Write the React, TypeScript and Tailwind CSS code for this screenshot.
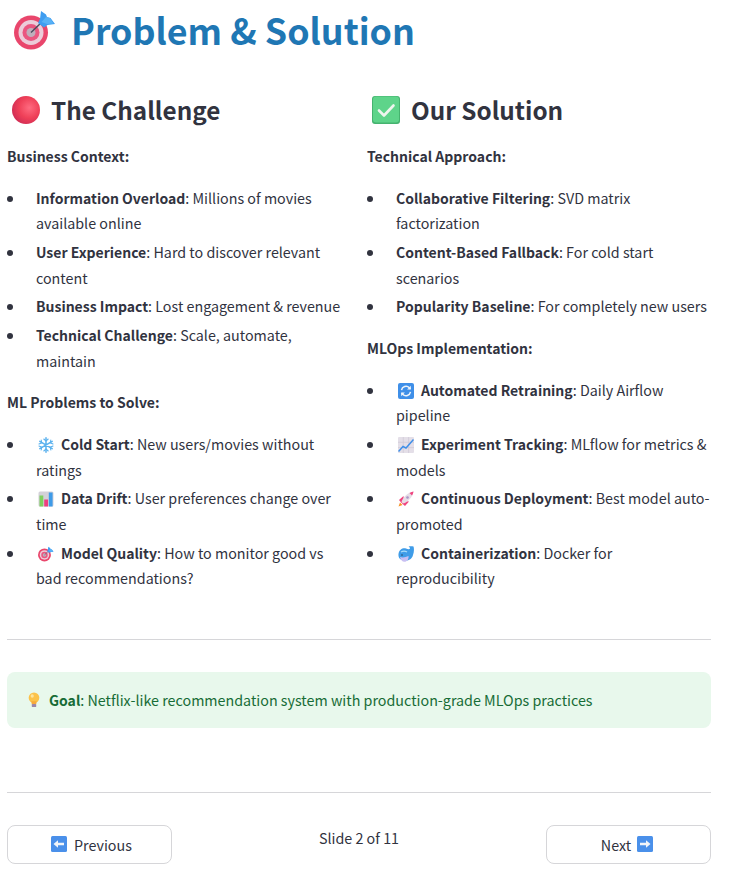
import { FC, ReactNode } from 'react';

type IconProps = { className: string };

const Dart: FC<IconProps> = ({ className }) => (
	<svg viewBox="0 0 42 40" className={className}>
		<circle cx="17" cy="22.500" r="17" fill="#e9466c" />
		<circle cx="17" cy="22.500" r="12.500" fill="#ecccd9" />
		<circle cx="17" cy="22.500" r="8.500" fill="#ea5680" />
		<circle cx="17" cy="22.500" r="4.500" fill="#bfaebb" />
		<path d="M17 22.500 29 11" stroke="#4a4a5c" strokeWidth="1.400" />
		<path d="M24 13 26 9 27 1 32 4.500 33 7 36.500 8 41 14 33.500 15 30 17.500Z" fill="#3f9df0" />
		<path d="M27.500 12 32 7 36 8 39.500 13.500 33 14 Z" fill="#58b2f6" />
	</svg>
);

const RedCircle: FC<IconProps> = ({ className }) => (
	<svg viewBox="0 0 28 28" className={className}>
		<defs>
			<radialGradient id="redBall" cx="62%" cy="42%" r="62%">
				<stop offset="0%" stopColor="#ff6b80" />
				<stop offset="60%" stopColor="#ef4058" />
				<stop offset="100%" stopColor="#d42f55" />
			</radialGradient>
		</defs>
		<circle cx="14" cy="14" r="14" fill="url(#redBall)" />
	</svg>
);

const CheckBox: FC<IconProps> = ({ className }) => (
	<svg viewBox="0 0 28 28" className={className}>
		<rect width="28" height="28" rx="3" fill="#45b36f" />
		<rect x="1" y="0.5" width="26" height="26" rx="3" fill="#5ed48a" />
		<path d="M7 14.5 L12 19.5 L21.5 9.5" fill="none" stroke="#eef5ee" strokeWidth="2.6" strokeLinecap="round" strokeLinejoin="round" />
	</svg>
);

const Snowflake: FC<IconProps> = ({ className }) => (
	<svg viewBox="0 0 16 16" className={className} fill="none" stroke="#5cb2ee" strokeWidth="1.5" strokeLinecap="round">
		<path d="M8 .8V15.200M1.800 4.400 14.200 11.600M1.800 11.600 14.200 4.400" />
		<path d="M5.800 2 8 4 10.200 2M5.800 14 8 12 10.200 14M1 7 3.700 5.800 3.200 3M15 9 12.300 10.200 12.800 13M1 9 3.700 10.200 3.200 13M15 7 12.300 5.800 12.800 3" strokeWidth="1.100" />
	</svg>
);

const BarChart: FC<IconProps> = ({ className }) => (
	<svg viewBox="0 0 16 16" className={className}>
		<rect x="0.500" y="0.500" width="15" height="15" rx="1.500" fill="#d3d1d8" />
		<rect x="1.500" y="4.500" width="3.800" height="11" fill="#7fd05e" />
		<rect x="6.200" y="8.500" width="3.800" height="7" fill="#ee3f80" />
		<rect x="10.800" y="1.500" width="3.800" height="14" fill="#3f9be8" />
	</svg>
);

const Refresh: FC<IconProps> = ({ className }) => (
	<svg viewBox="0 0 16 16" className={className}>
		<rect width="16" height="16" rx="2" fill="#3f8fe8" />
		<path d="M3.500 7.200A4.600 4.600 0 0 1 11.300 4.700L12.500 6" fill="none" stroke="#eef4fb" strokeWidth="1.500" />
		<path d="M12.800 2.800V6.500H9.100Z" fill="#eef4fb" />
		<path d="M12.500 8.800A4.600 4.600 0 0 1 4.700 11.300L3.500 10" fill="none" stroke="#eef4fb" strokeWidth="1.500" />
		<path d="M3.200 13.200V9.500H6.900Z" fill="#eef4fb" />
	</svg>
);

const LineChart: FC<IconProps> = ({ className }) => (
	<svg viewBox="0 0 16 16" className={className}>
		<rect width="16" height="16" rx="1" fill="#e4dfe8" />
		<path d="M0 5.300H16M0 10.600H16M5.300 0V16M10.600 0V16" stroke="#cfc8d6" strokeWidth="0.700" />
		<path d="M.5 14.500 5 9.500 8 11 15.500 2.500" fill="none" stroke="#3f8fe8" strokeWidth="1.500" />
	</svg>
);

const Rocket: FC<IconProps> = ({ className }) => (
	<svg viewBox="0 0 16 16" className={className}>
		<path d="M.5 15.500 2 11.500 4.500 14Z" fill="#f79329" />
		<path d="M1 9 5.500 5 6 10 3.500 12Z" fill="#f0447f" />
		<path d="M7 15 11 10.500 6 10 4 12.500Z" fill="#f0447f" />
		<path d="M3.500 10.500C5.500 5.500 10 1.500 15.500 .5 14.500 6 10.500 10.500 5.500 12.500Z" fill="#e6dde6" />
		<path d="M11.500 2C13 1.200 14.500 .7 15.500 .5 15.300 1.700 14.800 3.200 14 4.600Z" fill="#f0447f" />
		<circle cx="9.500" cy="6.500" r="1.300" fill="#a994c6" />
	</svg>
);

const Whale: FC<IconProps> = ({ className }) => (
	<svg viewBox="0 0 16 16" className={className}>
		<path d="M.5 8C1 3.500 5 1.500 8 2.500 10 3.300 11.500 3.500 12 2.500 12 1.500 11 .8 10.500 .5 12.500 0 14.500 .3 15.500 .5 16.300 3 16 6 15 9 14 13 11 14.500 8 14.500 3 14.500 0 12.500 .5 8Z" fill="#3f9ce8" />
		<path d="M2 11C4.500 11.800 7.500 11.500 10.500 10 11 13 9 15.800 6.500 15.800 4 15.800 2.500 13.500 2 11Z" fill="#c9bff2" />
		<path d="M3 6C5 4.800 7 4.800 9 6" stroke="#a9dcf8" strokeWidth="1.400" fill="none" />
		<circle cx="4" cy="9" r="0.700" fill="#243244" />
	</svg>
);

const Bulb: FC<IconProps> = ({ className }) => (
	<svg viewBox="0 0 14 18" className={className}>
		<circle cx="7" cy="6.500" r="6" fill="#fbc24a" />
		<path d="M4 10.500H10L9.500 14H4.500Z" fill="#f7a93a" />
		<rect x="4.500" y="13.500" width="5" height="3.500" rx="1" fill="#9b86a8" />
		<ellipse cx="5" cy="4.500" rx="1.800" ry="2" fill="#fde39c" />
	</svg>
);

const ArrowBox: FC<IconProps & { flip?: boolean }> = ({ className, flip }) => (
	<svg viewBox="0 0 16 16" className={className}>
		<rect width="16" height="16" rx="1.500" fill="#4a90ea" />
		<path
			d={flip ? 'M13.500 8 9 4.300V6.800H3V9.200H9V11.700Z' : 'M2.500 8 7 4.300V6.800H13V9.200H7V11.700Z'}
			fill="#f2f5f9"
		/>
	</svg>
);

const Emoji: FC<{ children: ReactNode }> = ({ children }) => (
	<span className="inline-block h-[16px] leading-none align-[-3px] mr-[7px] ml-[2px]">{children}</span>
);

const Bold: FC<{ children: ReactNode }> = ({ children }) => (
	<strong className="font-semibold text-[14px] leading-none">{children}</strong>
);

const SectionTitle: FC<{ icon: ReactNode; title: string }> = ({ icon, title }) => (
	<h3 className="flex items-center h-[40px] mb-[13px] pl-[5px] text-[24.3px] font-semibold leading-[40px]">
		{icon}
		<span className="ml-[11px]">{title}</span>
	</h3>
);

const Subhead: FC<{ children: ReactNode }> = ({ children }) => (
	<p className="mb-[16px]">
		<Bold>{children}</Bold>
	</p>
);

const Bullets: FC<{ items: { icon?: ReactNode; label: string; text: string }[] }> = ({ items }) => (
	<ul className="list-disc pl-[18px] mb-[16px]">
		{items.map((item) => (
			<li key={item.label} className="mb-[3.2px] pl-[11px] marker:text-[#31333f]">
				{item.icon && <Emoji>{item.icon}</Emoji>}
				<Bold>{item.label}</Bold>: {item.text}
			</li>
		))}
	</ul>
);

const small = 'w-[16px] h-[16px] block';

export default function App() {
	return (
		<div
			className="w-[737px] h-[885px] bg-white pl-[7px] pr-[26px] text-[14.3px] leading-[25.6px] text-[#31333f] overflow-hidden"
			style={{ fontFamily: '"Noto Sans CJK SC", "Noto Sans", sans-serif' }}
		>
			<h1 className="flex items-center h-[59px] pl-[7px] text-[#1f77b4] text-[35.8px] font-bold leading-[59px]">
				<Dart className="w-[42px] h-[40px]" />
				<span className="ml-[15px]">Problem &amp; Solution</span>
			</h1>

			<div className="grid grid-cols-2 gap-[16px] mt-[31px]">
				<div>
					<SectionTitle icon={<RedCircle className="w-[28px] h-[28px]" />} title="The Challenge" />
					<Subhead>Business Context:</Subhead>
					<Bullets
						items={[
							{ label: 'Information Overload', text: 'Millions of movies available online' },
							{ label: 'User Experience', text: 'Hard to discover relevant content' },
							{ label: 'Business Impact', text: 'Lost engagement & revenue' },
							{ label: 'Technical Challenge', text: 'Scale, automate, maintain' },
						]}
					/>
					<Subhead>ML Problems to Solve:</Subhead>
					<Bullets
						items={[
							{ icon: <Snowflake className={small} />, label: 'Cold Start', text: 'New users/movies without ratings' },
							{ icon: <BarChart className={small} />, label: 'Data Drift', text: 'User preferences change over time' },
							{ icon: <Dart className={small} />, label: 'Model Quality', text: 'How to monitor good vs bad recommendations?' },
						]}
					/>
				</div>
				<div>
					<SectionTitle icon={<CheckBox className="w-[28px] h-[28px]" />} title="Our Solution" />
					<Subhead>Technical Approach:</Subhead>
					<Bullets
						items={[
							{ label: 'Collaborative Filtering', text: 'SVD matrix factorization' },
							{ label: 'Content-Based Fallback', text: 'For cold start scenarios' },
							{ label: 'Popularity Baseline', text: 'For completely new users' },
						]}
					/>
					<Subhead>MLOps Implementation:</Subhead>
					<Bullets
						items={[
							{ icon: <Refresh className={small} />, label: 'Automated Retraining', text: 'Daily Airflow pipeline' },
							{ icon: <LineChart className={small} />, label: 'Experiment Tracking', text: 'MLflow for metrics & models' },
							{ icon: <Rocket className={small} />, label: 'Continuous Deployment', text: 'Best model auto-promoted' },
							{ icon: <Whale className={small} />, label: 'Containerization', text: 'Docker for reproducibility' },
						]}
					/>
				</div>
			</div>

			<hr className="mt-[32px] border-0 border-t border-[#d6d6d9]" />

			<div className="flex items-center h-[56px] mt-[32px] pl-[17px] rounded-[8px] bg-[#e8f8ec] text-[#176c36]">
				<Emoji>
					<Bulb className="w-[16px] h-[16px] block" />
				</Emoji>
				<span className="whitespace-pre">
					<Bold>Goal</Bold>: Netflix-like recommendation system with production-grade MLOps practices
				</span>
			</div>

			<hr className="mt-[64px] border-0 border-t border-[#d6d6d9]" />

			<div className="flex justify-between mt-[32px]">
				<button className="flex items-center justify-center w-[165px] h-[39px] pl-[4px] rounded-[8px] border border-[#d6d6d9] bg-white">
					<ArrowBox className="w-[16px] h-[16px] mr-[7px]" />
					Previous
				</button>
				<p>Slide 2 of 11</p>
				<button className="flex items-center justify-center w-[165px] h-[39px] pr-[3px] rounded-[8px] border border-[#d6d6d9] bg-white">
					Next
					<ArrowBox flip className="w-[16px] h-[16px] ml-[6px]" />
				</button>
			</div>
		</div>
	);
}
